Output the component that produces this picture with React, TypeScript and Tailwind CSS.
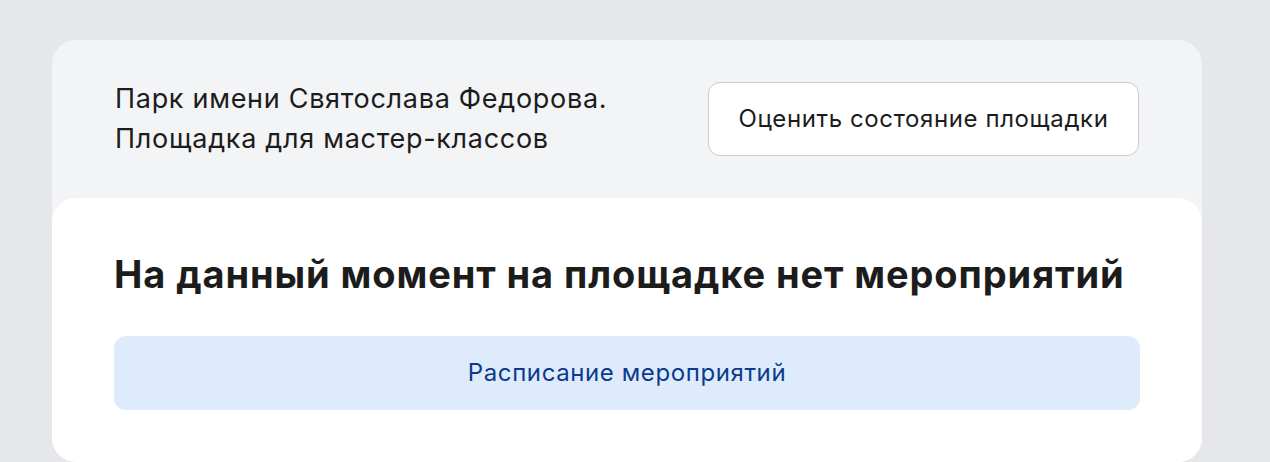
export default function App() {
  return (
    <div
      className="min-h-screen bg-[#e5e7eb] pl-[52px] pr-[68px] pt-10"
      style={{ fontFamily: "Inter, 'Noto Sans', sans-serif" }}
    >
      <div className="rounded-3xl bg-[#f3f4f6]">
        <div className="flex items-center justify-between px-[63px] py-[39px]">
          <div className="text-[27px] leading-[40px] tracking-[0.7px] text-[#1c1c1c]">
            <div>Парк имени Святослава Федорова.</div>
            <div>Площадка для мастер-классов</div>
          </div>
          <button className="h-[74px] w-[431px] rounded-xl border border-[#c9cbce] bg-white text-[24px] tracking-[0.6px] text-[#1c1c1c]">
            Оценить состояние площадки
          </button>
        </div>
        <div className="rounded-3xl bg-white px-[62px] pt-[53px] pb-[52px]">
          <h1 className="text-[38px] font-bold leading-[46px] tracking-[0.9px] text-[#1c1c1c]">
            На данный момент на площадке нет мероприятий
          </h1>
          <button className="mt-[39px] h-[74px] w-full rounded-xl bg-[#deebfc] text-[24px] tracking-[0.6px] text-[#0d3a8c]">
            Расписание мероприятий
          </button>
        </div>
      </div>
    </div>
  );
}
